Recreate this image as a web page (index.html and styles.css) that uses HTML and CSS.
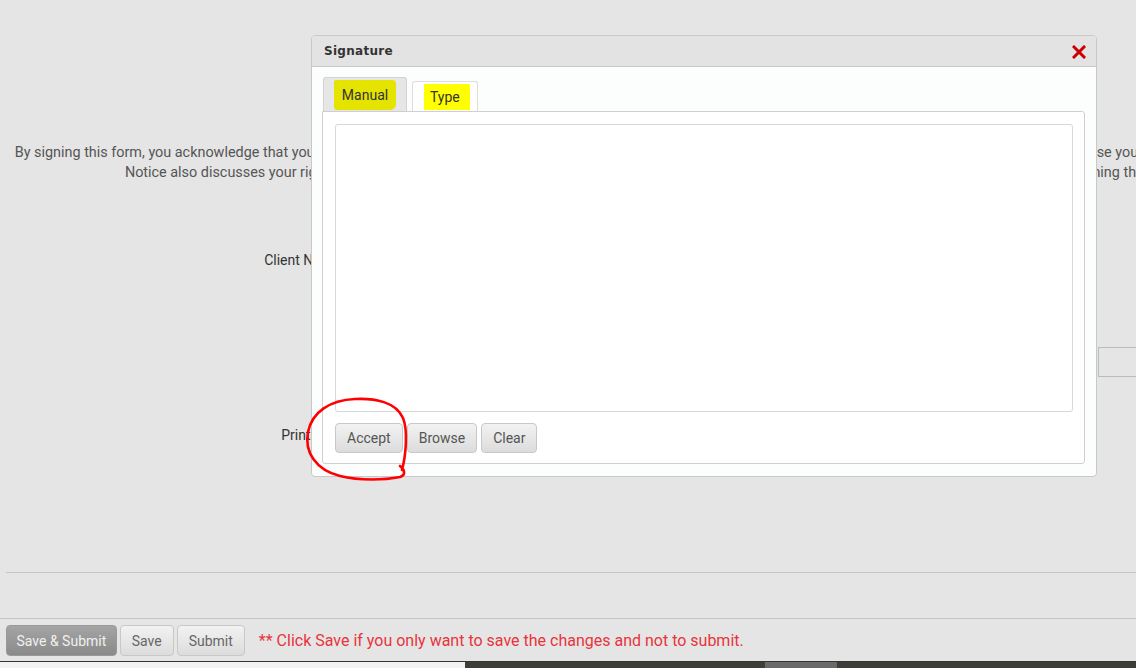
FILE: index.html
```html
<!DOCTYPE html>
<html>
<head>
    <title>Consent Form</title>
    <link rel="stylesheet" href="styles.css">
</head>
<body>
    <div class="page">
        <div class="notice">
            <div class="notice-line">By signing this form, you acknowledge that you have received a written copy of our Notice of Privacy Practices, which explains in detail how this office may use, and disclose your health information. The</div>
            <div class="notice-line">Notice also discusses your rights regarding your protected health information, and explains that you may also ask at any time to review it fully before signing this form.</div>
        </div>

        <div class="form-rows">
            <div class="form-row">
                <label class="form-label label-client">Client Name:</label>
            </div>
            <div class="form-row row-input">
                <input type="text" class="date-input">
            </div>
            <div class="form-row row-print">
                <label class="form-label">Printed Name:</label>
            </div>
        </div>

        <div class="divider"></div>

        <div class="footer">
            <button class="btn btn-dark">Save &amp; Submit</button>
            <button class="btn">Save</button>
            <button class="btn">Submit</button>
            <span class="footer-note">** Click Save if you only want to save the changes and not to submit.</span>
        </div>

        <div class="taskbar">
            <div class="taskbar-light"></div>
            <div class="taskbar-dark">
                <div class="taskbar-item"></div>
            </div>
        </div>
    </div>

    <div class="dialog">
        <div class="dialog-title">
            <span>Signature</span>
            <svg class="dialog-close" width="14" height="14" viewBox="0 0 14 14">
                <path d="M2 2 L12 12 M12 2 L2 12" stroke="#cc0000" stroke-width="3" stroke-linecap="square"/>
            </svg>
        </div>
        <div class="dialog-body">
            <div class="tabs">
                <div class="tab tab-manual"><span class="mark mark-manual">Manual</span></div>
                <div class="tab tab-type"><span class="mark mark-type">Type</span></div>
            </div>
            <div class="tab-panel">
                <div class="sign-pad"></div>
                <div class="pad-buttons">
                    <button class="btn pad-btn">Accept</button>
                    <button class="btn pad-btn">Browse</button>
                    <button class="btn pad-btn">Clear</button>
                </div>
            </div>
        </div>
    </div>

    <!-- red pen circle around Accept -->
    <svg class="pen-circle" width="1136" height="668" viewBox="0 0 1136 668">
        <path d="M402 470 C406 455 408 430 403 418 C396 402 375 398 355 399 C330 400 312 412 308 432 C304 452 316 470 340 476 C360 481 385 480 400 477 C406 475 405 470 400 466"
              fill="none" stroke="#ff0000" stroke-width="2.6" stroke-linecap="round" stroke-linejoin="round"/>
    </svg>
</body>
</html>
```

FILE: styles.css
```css
body {
    margin: 0;
    background-color: #e5e5e5;
    font-family: Roboto, "Liberation Sans", sans-serif;
    font-size: 14px;
    color: #555;
    overflow: hidden;
    height: 668px;
}
.page {
    width: 1136px;
    height: 668px;
    overflow: hidden;
    display: flex;
    flex-direction: column;
}
.notice {
    padding-top: 143px;
    width: 1310px;
    text-align: center;
    font-size: 14.4px;
}
.notice-line {
    line-height: 20px;
    white-space: nowrap;
}
.form-rows {
    padding-top: 67px;
    height: 322px;
}
.form-row {
    display: flex;
    height: 20px;
    line-height: 20px;
}
.form-label {
    width: 370px;
    text-align: right;
    color: #333;
}
.form-label.label-client {
    width: 344px;
}
.row-input {
    margin-top: 77px;
    height: 30px;
    padding-left: 1098px;
}
.date-input {
    width: 200px;
    height: 30px;
    box-sizing: border-box;
    border: 1px solid #bbb;
    background: #e5e5e5;
    flex-shrink: 0;
}
.row-print {
    margin-top: 48px;
}
.divider {
    margin-left: 6px;
    height: 1px;
    background: #c4c4c4;
}
.footer {
    margin-top: 45px;
    border-top: 1px solid #c4c4c4;
    padding: 6px 6px 0;
    height: 37px;
    box-sizing: border-box;
    display: flex;
    align-items: flex-start;
    gap: 3px;
}
.btn {
    height: 31px;
    padding: 0 11px;
    font-family: Roboto, "Liberation Sans", sans-serif;
    font-size: 14px;
    color: #666;
    background: linear-gradient(#f2f2f2, #dcdcdc);
    border: 1px solid #c8c8c8;
    border-radius: 4px;
}
.btn-dark {
    padding: 0 9.5px;
    background: linear-gradient(#a4a4a4, #8a8a8a);
    border-color: #999;
    color: #f0f0f0;
}
.footer-note {
    margin-left: 11px;
    line-height: 31px;
    font-size: 16px;
    color: #e8343c;
    white-space: nowrap;
}
.taskbar {
    margin-top: 6px;
    height: 6px;
    border-top: 1px solid #333;
    display: flex;
}
.taskbar-light {
    width: 465px;
    background: #f2f2f2;
}
.taskbar-dark {
    flex: 1;
    background: #3f3d3a;
    padding-left: 300px;
}
.taskbar-item {
    width: 72px;
    height: 100%;
    background: #6a6a6a;
}

/* dialog */
.dialog {
    position: absolute;
    left: 311px;
    top: 35px;
    width: 786px;
    height: 442px;
    box-sizing: border-box;
    border: 1px solid #c8c8c8;
    border-radius: 4px;
    background: #fcfdfd;
    overflow: hidden;
}
.dialog-title {
    height: 30px;
    background: #e3e3e3;
    border-bottom: 1px solid #c8c8c8;
    display: flex;
    align-items: center;
    justify-content: space-between;
    padding: 0 10px 0 12px;
    font-family: "DejaVu Sans", sans-serif;
    font-weight: bold;
    font-size: 12px;
    letter-spacing: 0.3px;
    color: #333;
}
.dialog-close {
    margin-top: 2px;
}
.dialog-body {
    padding: 10px 11px 0 10px;
}
.tabs {
    display: flex;
    align-items: flex-end;
    gap: 5px;
    padding-left: 1px;
    height: 34px;
}
.tab {
    border: 1px solid #d3d3d3;
    border-bottom: none;
    border-radius: 3px 3px 0 0;
    display: flex;
    justify-content: center;
    box-sizing: border-box;
}
.tab-manual {
    width: 84px;
    height: 34px;
    background: #e6e6e6;
    padding-top: 2px;
}
.tab-type {
    width: 66px;
    height: 30px;
    background: #fff;
    border-color: #ddd;
    padding-top: 2px;
    justify-content: flex-start;
}
.mark {
    color: #333;
}
.mark-manual {
    background: #e4e400;
    padding: 0 8px;
    line-height: 30px;
    height: 30px;
    border-radius: 2px 4px 6px 3px;
}
.mark-type {
    background: #ffff00;
    padding: 0 10px 0 6px;
    margin-left: 11px;
    line-height: 26px;
    height: 26px;
    border-radius: 1px;
}
.tab-panel {
    height: 353px;
    box-sizing: border-box;
    border: 1px solid #cfcfcf;
    border-radius: 0 3px 3px 3px;
    background: #fff;
    padding: 12px 11px 0 12px;
}
.sign-pad {
    height: 288px;
    box-sizing: border-box;
    border: 1px solid #d8d8d8;
    border-radius: 3px;
    background: #fff;
}
.pad-buttons {
    display: flex;
    gap: 4px;
    margin-top: 11px;
}
.pad-btn {
    height: 30px;
    padding: 0 11px;
    color: #555;
}
.pen-circle {
    position: absolute;
    left: 0;
    top: 0;
    pointer-events: none;
}
```
